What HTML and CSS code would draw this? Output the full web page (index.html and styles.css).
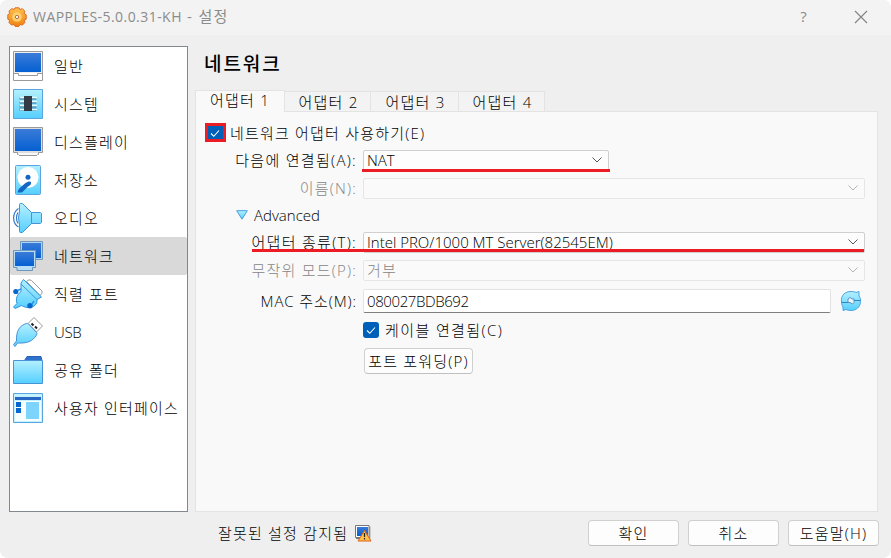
FILE: index.html
```html
<!DOCTYPE html>
<html lang="ko">
<head>
<meta charset="utf-8">
<title>WAPPLES-5.0.0.31-KH - 설정</title>
<link rel="stylesheet" href="styles.css">
</head>
<body>
<svg class="defs" width="0" height="0" aria-hidden="true">
  <defs>
    <linearGradient id="screen" x1="0" y1="0" x2="0" y2="1"><stop offset="0" stop-color="#3a7bd8"/><stop offset="1" stop-color="#0560d2"/></linearGradient>
    <linearGradient id="cyan" x1="0" y1="0" x2="0" y2="1"><stop offset="0" stop-color="#b4f0ff"/><stop offset="1" stop-color="#55cfff"/></linearGradient>
    <linearGradient id="gear" x1="0" y1="0" x2="0" y2="1"><stop offset="0" stop-color="#ffc04e"/><stop offset="1" stop-color="#ef8210"/></linearGradient>
  </defs>
</svg>
<div class="window">
  <header class="titlebar">
    <svg class="app-icon" width="20" height="20" viewBox="0 0 20 20">
      <path d="M8 .8h4l.9 1.700 2.500-.8 2.400 2.500-.8 2.400 2.200 1.200v4.400l-2 1 .7 2.300-2.500 2.600-2.400-.7-1.100 2H8.100L7 17.400l-2.400.7L2 15.500l.7-2.300-1.900-1V7.800l1.900-1.200L2 4.200l2.600-2.500 2.500.8z" fill="url(#gear)" stroke="#dc6a22"/>
      <circle cx="10" cy="10" r="4.800" fill="#ffcf70"/><circle cx="10" cy="10" r="1.700" fill="#f4f1ee" stroke="#a9663c" stroke-width=".9"/>
    </svg>
    <h1 class="title">WAPPLES-5.0.0.31-KH<span class="title-ko"> - 설정</span></h1>
    <span class="help">?</span>
    <svg class="close" width="14" height="14" viewBox="0 0 14 14"><path d="M1 1l12 12M13 1L1 13" stroke="#858585" stroke-width="1.200"/></svg>
  </header>
  <div class="content">
    <nav class="sidebar">
      <div class="item"><svg class="ico" viewBox="0 0 30 30"><path d="M.5.500h29v29H.5z" fill="#fff" stroke="#999"/><path d="M1.500 1.500h27v20h-27z" fill="#ddd"/><path d="M2 2h26v19H2z" fill="url(#screen)"/><path d="M1 22.500h4.500v2h19v-2H29" fill="none" stroke="#999"/></svg><span>일반</span></div>
      <div class="item"><svg class="ico" viewBox="0 0 30 30"><path d="M.5.500h29v29H.5z" fill="url(#cyan)" stroke="#5aa5df"/><path d="M6.500 9.500h17M6.500 13.500h17M6.500 17.500h17M6.500 20.500h17" stroke="#4d92b8" stroke-width="2.400"/><path d="M7 8.500h17M7 12.500h17M7 16.500h17M7 20.500h17" stroke="#eaffff" stroke-width="1.300"/><path d="M11 7h8v15h-8z" fill="#343b46"/></svg><span>시스템</span></div>
      <div class="item"><svg class="ico" viewBox="0 0 30 30"><path d="M.5.500h29v25h-4v2h-21v-2h-4z" fill="#ddd" stroke="#999"/><path d="M2 2h26v22H2z" fill="url(#screen)"/><path d="M5 26h20l-1 3H6z" fill="#f8f8f8"/><path d="M6 28.500h18" stroke="#999"/></svg><span>디스플레이</span></div>
      <div class="item"><svg class="ico" viewBox="0 0 30 30"><path d="M2.500 1.500q0-1 1-1h23q1 0 1 1v27q0 1-1 1h-23q-1 0-1-1z" fill="url(#cyan)" stroke="#5aa5df"/><circle cx="15" cy="12.500" r="10.500" fill="#fff"/><path d="M18 17c.5 2-1 3.500-3 4.500l-3 3-3 3H4.500c.5-3 2-4.500 4-6L12.500 18c2-1.500 4.500-2 5.500-1z" fill="#1266c4"/><circle cx="15" cy="12.300" r="2.500" fill="#1266c4"/></svg><span>저장소</span></div>
      <div class="item"><svg class="ico" viewBox="0 0 30 30"><path d="M5.500 5.500C-1 10-1 20 5.500 24M5 9.500c-2 3-2 8 0 11" fill="none" stroke="#3478c8" stroke-width="1.200"/><path d="M6.500 8V1.500q0-1 1-1h2l9 9h9l1 1v9l-1 1h-9l-9 9h-2q-1 0-1-1V22q-2-7 0-14z" fill="url(#cyan)" stroke="#4892d8"/><path d="M18.500 9.500v11" stroke="#4892d8"/></svg><span>오디오</span></div>
      <div class="item selected"><svg class="ico" viewBox="0 0 30 30"><path d="M7.500.500h22v18h-22z" fill="#a9d4f5" stroke="#7197b8"/><path d="M9 2h19v15H9z" fill="url(#screen)"/><path d="M.5 9.500h22v17h-3v3H4v-3H.5z" fill="#b6dcf6" stroke="#7197b8"/><path d="M2 11h19v14H2z" fill="url(#screen)"/></svg><span>네트워크</span></div>
      <div class="item"><svg class="ico" viewBox="0 0 30 30"><path d="M13.500 2.500Q16-.5 18.500 1.500L29 12q1 2-2 4.500z" fill="#fff" stroke="#999"/><path d="M10.500.500L28.500 18l-4.500 2.500c.5 5-3.500 8-8 8-3 0-5-.500-7.500-2L2 29.500.5 28 4 24.500c-1.500-5 0-9 4-12V4z" fill="url(#cyan)" stroke="#2f91df"/><path d="M8 5l16 15.500" stroke="#4892d8"/><circle cx="2.800" cy="12.500" r="2.600" fill="#0867ce"/><circle cx="17" cy="26.700" r="2.700" fill="#0867ce"/><path d="M4.500 11.500L8 10M19 25l2-3" stroke="#2f91df" stroke-width="1.500"/></svg><span>직렬 포트</span></div>
      <div class="item"><svg class="ico" viewBox="0 0 30 30"><path d="M15 6.500L21 .500 29.500 9l-6 6z" fill="#fff" stroke="#999"/><path d="M18.500 6.500l2 2M22 9.500l2 2" stroke="#222" stroke-width="2"/><path d="M13.500 6.500q1-.5 2 .5l8 8.500q1 1 0 2.500c-4 6.500-9.500 8.500-19 8L2 29.500l-1.500-2L3.500 24C3 14 6.500 8.500 13.500 6.500z" fill="url(#cyan)" stroke="#4892d8"/></svg><span class="usb">USB</span></div>
      <div class="item"><svg class="ico" viewBox="0 0 30 30"><path d="M11.500 5.500L14 1.500h14l1 4z" fill="#2f72cd" stroke="#2764b8"/><path d="M.5 5.500h29v23H.5z" fill="url(#cyan)" stroke="#4892d8"/></svg><span>공유 폴더</span></div>
      <div class="item"><svg class="ico" viewBox="0 0 30 30"><path d="M.5.500h29v29H.5z" fill="#c5f2ff" stroke="#5aa5df"/><path d="M2 4h26v3H2z" fill="#2868c4"/><path d="M2 8h26v20H2z" fill="#f7ffff"/><path d="M3 9h5v5H3zM3 15h5v5H3z" fill="#0867ce"/><path d="M13 9h13v17H13z" fill="#7dd4ff"/></svg><span>사용자 인터페이스</span></div>
    </nav>
    <main class="page">
      <h2 class="heading">네트워크</h2>
      <div class="tabs">
        <div class="tab active">어댑터 1</div><div class="tab">어댑터 2</div><div class="tab">어댑터 3</div><div class="tab">어댑터 4</div>
      </div>
      <section class="panel">
        <div class="row enable">
          <span class="check marked"><svg width="16" height="16" viewBox="0 0 16 16"><path d="M4 8.500l2.800 2.800L12 5.500" fill="none" stroke="#fff" stroke-width="1.100"/></svg></span>
          <span class="enable-text">네트워크 어댑터 사용하기(E)</span>
        </div>
        <div class="row attached">
          <label>다음에 연결됨(A):</label>
          <div class="combo short"><span class="nat">NAT</span><svg class="chev" viewBox="0 0 10 6"><path d="M.5.500L5 5 9.500.500"/></svg><i class="underline"></i></div>
        </div>
        <div class="row name disabled">
          <label>이름(N):</label>
          <div class="combo"><svg class="chev" viewBox="0 0 10 6"><path d="M.5.500L5 5 9.500.500"/></svg></div>
        </div>
        <div class="row advanced">
          <svg width="12" height="10" viewBox="0 0 12 10"><path d="M.7.700h10.600L6 9.200z" fill="url(#cyan)" stroke="#469ee0"/></svg>
          <span class="adv-text">Advanced</span>
        </div>
        <div class="row type">
          <label>어댑터 종류(T):</label>
          <div class="combo"><span class="intel">Intel PRO/1000 MT Server(82545EM)</span><svg class="chev" viewBox="0 0 10 6"><path d="M.5.500L5 5 9.500.500"/></svg><i class="underline"></i></div>
        </div>
        <div class="row mode disabled">
          <label>무작위 모드(P):</label>
          <div class="combo"><span>거부</span><svg class="chev" viewBox="0 0 10 6"><path d="M.5.500L5 5 9.500.500"/></svg></div>
        </div>
        <div class="row mac">
          <label>MAC 주소(M):</label>
          <div class="input"><span class="address">080027BDB692</span></div>
          <svg class="refresh" width="22" height="22" viewBox="0 0 22 22"><path d="M1.500 12C.5 5 5.500 1.500 11 1.500c2.500 0 4 .5 5 1L19 1.500V6c1.500 2 1.700 3.500 1.500 5.500C20.500 17 16 20.500 11 20.500c-2 0-4-.5-5-1L3 20.500V17c-1-1.500-1.500-3-1.500-5z" fill="url(#cyan)" stroke="#4aa4e2"/><path d="M1.500 12.500H8M14 10.500h6.500" stroke="#2f83cc"/><path d="M8 9l2-1.500 2 1.500h2v3.500L12.500 14 10 12.500H8z" fill="#e8f8ff" stroke="#5a84b4" stroke-width=".9"/></svg>
        </div>
        <div class="row cable">
          <span class="check"><svg width="16" height="16" viewBox="0 0 16 16"><path d="M4 8.500l2.800 2.800L12 5.500" fill="none" stroke="#fff" stroke-width="1.100"/></svg></span>
          <span class="cable-text">케이블 연결됨(C)</span>
        </div>
        <div class="row"><button class="btn forward"><span>포트 포워딩(P)</span></button></div>
      </section>
    </main>
  </div>
  <footer class="footer">
    <span class="warning-text">잘못된 설정 감지됨</span>
    <svg class="warning" width="17" height="17" viewBox="0 0 17 17"><path d="M3 1.500h12.500V14H3z" fill="#aaa"/><path d="M.5.500h13.500v12H.5z" fill="#fff" stroke="#777"/><path d="M2 2h11v9H2z" fill="url(#screen)"/><path d="M1 13.500h4" stroke="#777"/><path d="M9.500 5.500l6.500 10.500H3z" fill="#ffc24d" stroke="#e06018" stroke-linejoin="round"/><path d="M9.500 8v4M9.500 13v1.500" stroke="#222" stroke-width="1.300"/></svg>
    <div class="actions"><button class="btn"><span>확인</span></button><button class="btn"><span>취소</span></button><button class="btn"><span class="help-text">도움말(H)</span></button></div>
  </footer>
</div>
</body>
</html>
```

FILE: styles.css
```css
* { box-sizing: border-box; }
body {
  margin: 0;
  background: #fff;
  color: #000;
  font: 300 15px/20px "Open Sans", "Noto Sans CJK KR", sans-serif;
  letter-spacing: 1.2px;
}
.defs { position: absolute; }
.window { width: 891px; height: 558px; background: #efefef; border-radius: 8px; overflow: hidden; display: flex; flex-direction: column; }
.titlebar { height: 35px; flex: none; background: #f3f3f3; display: flex; align-items: center; padding: 0 23px 2px 7px; color: #8b8b8b; }
.title { margin: 0 0 0 6px; flex: 1; font-size: 14px; font-weight: 400; letter-spacing: 0.45px; }
.title-ko { font-size: 15px; letter-spacing: 1.3px; }
.help { font-size: 15px; font-weight: 400; margin-right: 46px; line-height: 18px; padding-bottom: 2px; }
.content { display: flex; height: 477px; flex: none; }
.sidebar { width: 179px; height: 466px; margin: 11px 7px 0 9px; background: #fff; border: 1px solid #828790; flex: none; }
.item { height: 38px; padding-left: 3px; display: flex; align-items: center; gap: 11px; white-space: nowrap; }
.item.selected { background: #d9d9d9; border-radius: 2px; }
.ico { width: 30px; height: 30px; flex: none; }
.page { width: 683px; padding-top: 17px; }
.heading { margin: 0 0 0 9px; height: 38px; font-size: 19px; font-weight: 500; line-height: 24px; letter-spacing: 1.9px; }
.tabs { display: flex; align-items: flex-end; height: 21px; }
.tab { height: 20px; width: 88px; background: #f3f3f3; border: 1px solid #e3e3e3; border-width: 1px 1px 0 0; padding-left: 2px; text-align: center; line-height: 20px; white-space: nowrap; }
.tab:nth-child(2), .tab:nth-child(4) { width: 86px; }
.tab.active { height: 22px; width: 90px; margin-bottom: -1px; padding-left: 0; background: #f9f9f9; border-left-width: 1px; position: relative; line-height: 18px; }
.panel { height: 401px; background: #f9f9f9; border: 1px solid #e3e3e3; padding-top: 10px; }
.row { display: flex; align-items: center; height: 22px; }
.row label { width: 161px; margin-right: 6px; text-align: right; white-space: nowrap; flex: none; }
.attached label, .type label { letter-spacing: 1.3px; }
.mac label { letter-spacing: 0.9px; }
.enable { padding-left: 9px; gap: 4px; height: 21px; margin-bottom: 6px; }
.check { width: 16px; height: 16px; border-radius: 3px; background: #005fb8; flex: none; }
.check svg { display: block; }
.check.marked { width: 21px; height: 19px; border: 3px solid #ed1c24; border-radius: 0; }
.marked svg { margin: -1px 0 0 -1px; }
.combo { position: relative; width: 502px; height: 21px; background: #fdfdfd; border: 1px solid #cfcfcf; border-radius: 2px; padding: 0 6px 0 3px; display: flex; align-items: center; white-space: nowrap; }
.combo.short { width: 246px; }
.chev { width: 10px; height: 6px; margin-left: auto; fill: none; stroke: #555; }
.underline { position: absolute; height: 3px; background: #ed1c24; left: -2px; right: -2px; bottom: -2px; }
.type .underline { left: -112px; right: 0; bottom: 0; }
.disabled { color: #858585; }
.disabled .combo { background: #fafafa; border-color: #e6e6e6; }
.disabled .chev { stroke: #b5b5b5; }
.attached { margin-bottom: 6px; }
.name { margin-bottom: 5px; }
.advanced { padding-left: 40px; gap: 6px; margin-bottom: 5px; }
.type { margin-bottom: 6px; }
.mode { margin-bottom: 8px; }
.mac { height: 24px; margin-bottom: 6px; }
.input { width: 468px; height: 24px; border: 1px solid #e3e3e3; border-bottom-color: #808080; border-radius: 2px; background: #fff; padding: 1px 3px; }
.refresh { margin-left: 9px; }
.cable { padding-left: 167px; gap: 6px; margin-bottom: 7px; }
.cable-text { letter-spacing: 1.4px; }
.btn { width: 91px; height: 26px; padding: 0; border: 1px solid #d0d0d0; border-bottom-color: #c0c0c0; border-radius: 4px; background: #fdfdfd; color: #000; font: inherit; letter-spacing: inherit; white-space: nowrap; line-height: 22px; }
.forward { width: 109px; margin-left: 168px; margin-top: 3px; flex: none; }
.footer { height: 46px; display: flex; align-items: center; padding: 0 12px 4px 218px; }
.warning { margin-left: 7px; }
.actions { display: flex; gap: 9px; margin-left: auto; }
.nat, .intel, .address, .usb, .adv-text { letter-spacing: 0; }
.address { letter-spacing: -0.4px; }
.usb { letter-spacing: -0.3px; }
```
